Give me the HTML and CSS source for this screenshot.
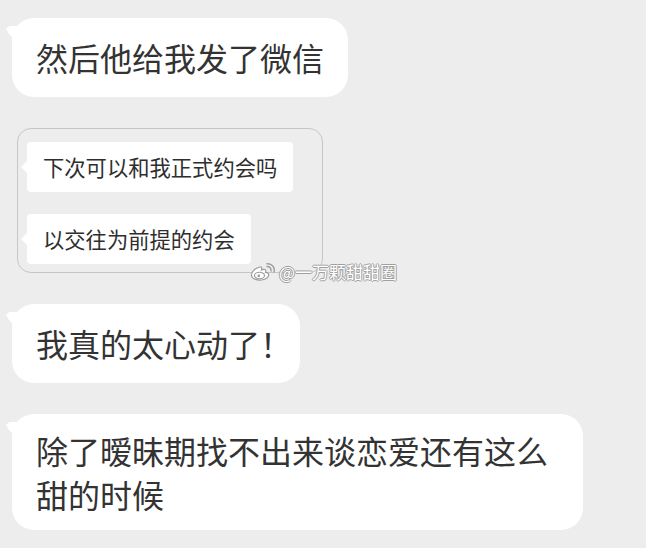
FILE: index.html
```html
<!DOCTYPE html>
<html lang="zh-CN">
<head>
    <meta charset="UTF-8">
    <meta name="viewport" content="width=device-width, initial-scale=1.0">
    <title>聊天截图</title>
    <link rel="stylesheet" href="styles.css">
</head>
<body>

    <div class="chat">
        <div class="bubble">然后他给我发了微信</div>

        <div class="shot">
            <div class="mini-bubble">下次可以和我正式约会吗</div>
            <div class="mini-bubble">以交往为前提的约会</div>

            <div class="watermark">
                <svg class="weibo-logo" width="26" height="18" viewBox="0 0 26 18">
                    <path d="M10 4 C5 5 1 9 1.5 12.5 C2 16 7 17.5 11.5 17 C16.5 16.5 19.5 13.5 18.5 11 C18 9.5 16 9.3 15.5 9.5 C16.3 7.5 15.5 6 13.5 6.3 C12.3 6.5 11.5 7 11.5 7 C12 5 11.5 3.6 10 4 Z" fill="#fff" stroke="#9c9c9c" stroke-width="1.2"/>
                    <ellipse cx="9.5" cy="12.5" rx="5" ry="3.3" fill="#fff" stroke="#9c9c9c" stroke-width="1.1"/>
                    <circle cx="8.8" cy="12.8" r="1.4" fill="#9c9c9c"/>
                    <path d="M17 3.5 C19.5 3.3 21.5 5.5 21 8" fill="none" stroke="#9c9c9c" stroke-width="1.4" stroke-linecap="round"/>
                    <path d="M17 0.8 C22 0.3 25.2 4.5 24 9" fill="none" stroke="#9c9c9c" stroke-width="1.4" stroke-linecap="round"/>
                </svg>
                <span class="watermark-text">@一万颗甜甜圈</span>
            </div>
        </div>

        <div class="bubble bubble-short">我真的太心动了！</div>

        <div class="bubble bubble-wide">除了暧昧期找不出来谈恋爱还有这么甜的时候</div>
    </div>

</body>
</html>
```

FILE: styles.css
```css
body {
    margin: 0;
    padding: 0;
    background-color: #ededed;
    font-family: "Noto Sans CJK SC", "Noto Sans", sans-serif;
    color: #333;
}

.chat {
    display: flex;
    flex-direction: column;
    align-items: flex-start;
    gap: 31px;
    padding: 18px 12px;
}

/* main chat bubbles */
.bubble {
    position: relative;
    background-color: #fff;
    border-radius: 22px;
    font-size: 32px;
    line-height: 44px;
    padding: 17px 24px 18px 24px;
}

.bubble::before {
    content: "";
    position: absolute;
    left: -6px;
    top: 8px;
    width: 12px;
    height: 18px;
    background-color: #fff;
    clip-path: polygon(0 14%, 30% 0, 100% 0, 100% 100%, 60% 70%, 20% 40%);
}

.bubble-short {
    padding-right: 8px;
}

.bubble-wide {
    box-sizing: border-box;
    max-width: 571px;
    padding: 14px 24px;
}

/* the screenshot inside the chat */
.shot {
    position: relative;
    display: flex;
    flex-direction: column;
    align-items: flex-start;
    gap: 22px;
    width: 286px;
    margin-left: 5px;
    padding: 13px 9px 8px 9px;
    border: 1px solid #c6c6c6;
    border-radius: 14px;
}

.mini-bubble {
    position: relative;
    background-color: #fff;
    border-radius: 4px;
    font-size: 21.3px;
    line-height: 50px;
    padding: 0 16px;
    color: #2e2e2e;
}

.mini-bubble::before {
    content: "";
    position: absolute;
    left: -6px;
    top: 19px;
    border-top: 6px solid transparent;
    border-bottom: 6px solid transparent;
    border-right: 6px solid #fff;
}

.watermark {
    position: absolute;
    left: 232px;
    top: 133px;
    display: flex;
    align-items: center;
    gap: 3px;
    white-space: nowrap;
}

.watermark-text {
    font-size: 17px;
    line-height: 20px;
    color: #fff;
    text-shadow: 1px 0 0 #a0a0a0, -1px 0 0 #a0a0a0, 0 1px 0 #a0a0a0, 0 -1px 0 #a0a0a0;
}
```
